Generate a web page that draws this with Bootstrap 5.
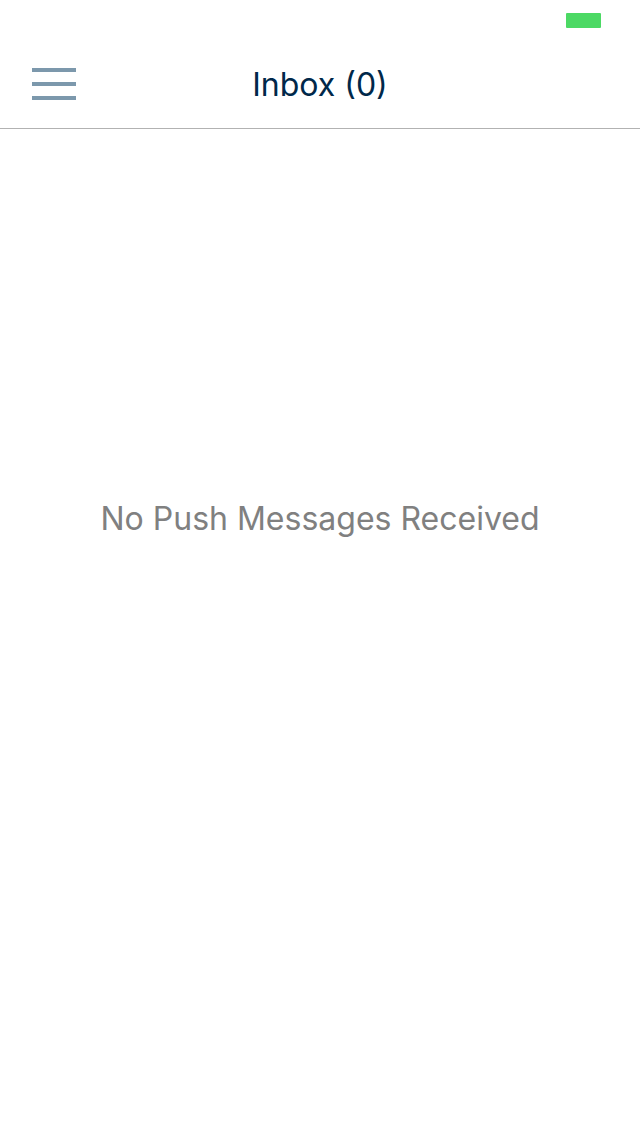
<!DOCTYPE html>
<html lang="en">
<head>
<meta charset="utf-8">
<meta name="viewport" content="width=device-width, initial-scale=1">
<title>Inbox</title>
<link href="https://cdn.jsdelivr.net/npm/bootstrap@5.3.0/dist/css/bootstrap.min.css" rel="stylesheet">
<style>
body { font-family: Inter, "Liberation Sans", sans-serif; background: #fff; }
.status-bar { height: 40px; padding-right: 39px; }
.top-bar { height: 89px; padding: 0 32px; border-bottom: 1px solid #b2b2b2; display: grid; grid-template-columns: 44px 1fr 44px; }
.menu-btn { line-height: 0; }
.title, .empty-note { font-size: 32px; line-height: 40px; font-weight: 400; }
.title { padding-top: 2px; color: #00284a; }
.empty-note { color: #808080; }
.space-above { flex: 370 1 0; }
.space-below { flex: 597 1 0; }
</style>
</head>
<body class="d-flex flex-column min-vh-100">
<div class="status-bar d-flex align-items-center justify-content-end">
  <svg width="35" height="15" role="img" aria-label="Battery charging"><rect width="35" height="15" rx="1" fill="#4cd964"/></svg>
</div>
<header class="top-bar align-items-center">
  <button type="button" class="menu-btn btn p-0 border-0 rounded-0" aria-label="Menu">
    <svg width="44" height="32" viewBox="0 0 44 32" fill="#7c98ac"><path d="M0 0h44v4H0zM0 14h44v4H0zM0 28h44v4H0z"/></svg>
  </button>
  <h1 class="title m-0 text-center">Inbox (0)</h1>
</header>
<main class="d-flex flex-column flex-grow-1 text-center">
  <div class="space-above"></div>
  <p class="empty-note m-0">No Push Messages Received</p>
  <div class="space-below"></div>
</main>
<script src="https://cdn.jsdelivr.net/npm/bootstrap@5.3.0/dist/js/bootstrap.bundle.min.js"></script>
</body>
</html>
